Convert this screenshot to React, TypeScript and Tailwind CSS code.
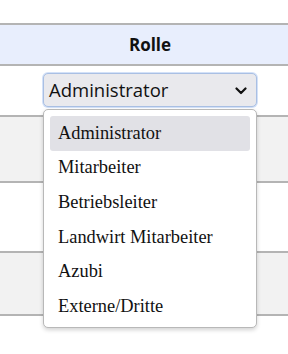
import React from "react";

const options = [
  "Administrator",
  "Mitarbeiter",
  "Betriebsleiter",
  "Landwirt Mitarbeiter",
  "Azubi",
  "Externe/Dritte",
];

export default function App() {
  return (
    <div className="relative w-[288px] h-[354px] bg-white overflow-hidden" style={{ fontFamily: '"Open Sans", sans-serif' }}>
      <div className="h-[23px]" />
      <div className="border-t-2 border-[#b4b4b4] bg-[#e8eefd] h-[41px] flex items-center">
        <div className="ml-[43px] w-[214px] text-center text-[17px] font-bold text-[#111]">Rolle</div>
      </div>
      <div className="border-t-2 border-[#b4b4b4] bg-white h-[51px] flex items-start pt-[7px]">
        <div className="ml-[43px] w-[214px] h-[34px] rounded-[5px] border border-[#a9bfe3] bg-[#e9e9ed] shadow-[0_0_0_1px_#d3e1f8] flex items-center justify-between pl-[5px] pr-[9px]">
          <span className="text-[18.5px] text-[#111] leading-none">Administrator</span>
          <svg width="12" height="8" viewBox="0 0 12 8" className="mt-[1px]">
            <path d="M1.5 1.5 L6 6 L10.5 1.5" fill="none" stroke="#111" strokeWidth="2.2" strokeLinecap="round" strokeLinejoin="round" />
          </svg>
        </div>
      </div>
      <div className="border-t-2 border-[#b4b4b4] bg-[#f2f2f2] h-[66px]" />
      <div className="border-t-2 border-[#b4b4b4] bg-white h-[70px]" />
      <div className="border-t-2 border-[#b4b4b4] bg-[#f2f2f2] h-[63px]" />
      <div className="border-t-2 border-[#b4b4b4]" />

      <div
        className="absolute left-[43px] top-[109px] w-[214px] h-[219px] bg-white border border-[#b8b8b8] rounded-[5px] shadow-[0_2px_4px_rgba(0,0,0,0.18)] px-[6px] pt-[6px] flex flex-col"
        style={{ fontFamily: '"Liberation Serif", "Times New Roman", serif' }}
      >
        {options.map((o, i) => (
          <div
            key={o}
            className={`h-[34.7px] flex items-center pl-[8px] text-[18.4px] text-[#111] rounded-[3px] ${i === 0 ? "bg-[#e1e1e6]" : ""}`}
          >
            {o}
          </div>
        ))}
      </div>
    </div>
  );
}
